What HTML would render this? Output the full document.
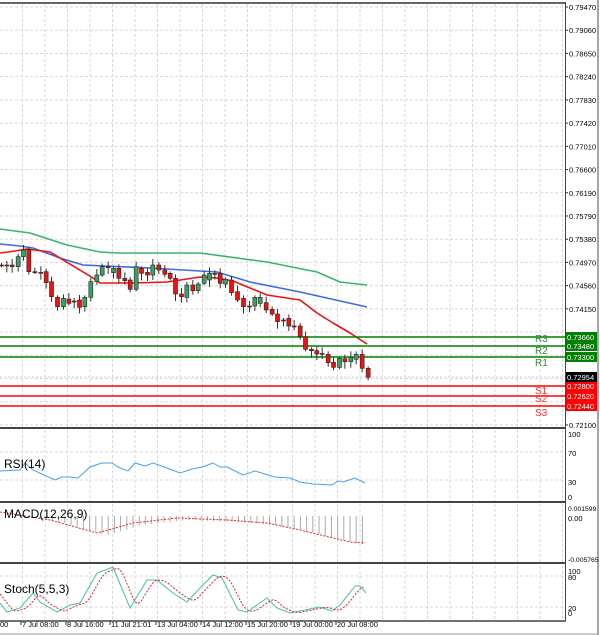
<!DOCTYPE html>
<html><head><meta charset="utf-8"><style>
html,body{margin:0;padding:0;background:#fff;width:600px;height:635px;overflow:hidden}
svg{display:block}
text{font-family:"Liberation Sans",sans-serif}
</style></head><body>
<svg id="s" width="600" height="635" xmlns="http://www.w3.org/2000/svg">
<rect width="600" height="635" fill="#fff"/>
<g id="grid" stroke="#d8d8d8" stroke-width="1" stroke-dasharray="3,2"></g>
<g id="ma" fill="none" stroke-width="1.6" stroke-linejoin="round"></g>
<g id="lv"></g>
<g id="cd"></g>
<g id="ind" fill="none"></g>
<g id="frame"></g>
<g id="lbl" font-size="7.5" fill="#000"></g>
</svg>
<script>
var NS="http://www.w3.org/2000/svg";
function el(p,t,a,txt){var e=document.createElementNS(NS,t);for(var k in a)e.setAttribute(k,a[k]);if(txt!=null)e.textContent=txt;document.getElementById(p).appendChild(e);return e;}
for(var x=22.5;x<565;x+=22.5){
 [[4,427],[430,501],[504,562],[566,620]].forEach(function(r){el('grid','line',{x1:x,x2:x,y1:r[0],y2:r[1]});});
}
var pl=["0.79470","0.79060","0.78650","0.78240","0.77830","0.77420","0.77010","0.76600","0.76190","0.75790","0.75380","0.74970","0.74560","0.74150","0.73740","0.73340","0.72920","0.72510","0.72100"];
for(var i=0;i<pl.length;i++){var y=7+i*23.22;el('grid','line',{x1:0,x2:565,y1:y,y2:y});
 if(i<14||i==18){el('lbl','line',{x1:565,x2:568,y1:y,y2:y,stroke:'#333'});el('lbl','text',{x:569,y:y+3},pl[i]);}}
[452,480].forEach(function(v){el('grid','line',{x1:0,x2:565,y1:v,y2:v});});
[576,607].forEach(function(v){el('grid','line',{x1:0,x2:565,y1:v,y2:v});});
function pth(p,pts,st,extra){var d=pts.map(function(q,i){return (i?'L':'M')+q[0]+' '+q[1];}).join(' ');var a={d:d,stroke:st};for(var k in extra)a[k]=extra[k];el(p,'path',a);}
pth('ma',[[0,229],[30,233],[67,245],[100,252],[117,253],[200,253],[267,262],[317,272],[340,282],[367,285]],'#3cb371');
pth('ma',[[0,244],[20,246],[33,248],[60,258],[83,265],[150,268],[217,272],[250,282],[300,292],[367,307]],'#4169e1');
pth('ma',[[0,253],[15,251],[27,249],[50,252],[93,278],[100,283],[133,283],[167,282],[200,277],[217,278],[233,281],[250,288],[267,295],[300,300],[317,313],[333,323],[350,333],[367,344]],'#f01010');
var C=[[0,135,136],[16,135,136],[32,135,140],[50,140,110],[66,110,90],[82,88,155],[100,155,156],[118,157,158],[134,155,188],[150,185,230],[168,232,260],[186,260,235],[202,237,250],[218,243,244],[234,240,262],[250,260,232],[268,232,185],[286,185,165],[302,165,140],[320,140,141],[336,158,145],[352,145,175],[370,175,182],[386,180,208],[404,208,140],[420,145,160],[438,157,165],[454,165,135],[472,135,150],[490,150,163],[506,160,175],[522,175,222],[540,222,230],[556,232,195],[574,195,212],[590,212,192],[608,190,165],[624,180,160],[640,160,161],[656,160,190],[672,192,178],[690,180,218],[708,215,240],[726,235,260],[744,258,259],[760,258,232],[776,250,232],[794,248,270],[812,268,282],[828,282,305],[846,300,301],[862,295,318],[878,318,319],[896,318,350],[912,350,388],[930,388,392],[946,392,402],[962,402,400],[980,403,428],[996,427,442],[1014,442,415],[1030,416,425],[1048,425,412],[1064,418,403],[1082,403,445],[1100,445,472]];
C.forEach(function(c,i){var x=c[0]/3+1.5,o=220+c[1]/3,cl=220+c[2]/3,hi=Math.min(o,cl)-2-(i*7%5),lo=Math.max(o,cl)+2+(i*5%6);
 el('cd','line',{x1:x,x2:x,y1:hi,y2:lo,stroke:'#333','stroke-width':1});
 var up=cl<o,t=Math.min(o,cl),h=Math.max(Math.abs(o-cl),1);
 el('cd','rect',{x:x-2,y:t,width:4,height:h,fill:up?'#3ca060':'#ee1111',stroke:'#222','stroke-width':0.6});});
var L=[[337,'#008000','0.73660','R3',342],[346,'#008000','0.73480','R2',354],[357,'#008000','0.73300','R1',366],[386,'#ff0000','0.72800','S1',394],[396,'#ff0000','0.72620','S2',402],[406,'#ff0000','0.72440','S3',416]];
L.forEach(function(l){el('lv','line',{x1:0,x2:565,y1:l[0],y2:l[0],stroke:l[1],'stroke-width':1.6});
 el('lv','rect',{x:566,y:l[0]-5,width:31,height:10,fill:l[1]});
 el('lv','text',{x:567,y:l[0]+3,'font-size':7.5,fill:'#fff'},l[2]);
 el('lv','text',{x:535,y:l[4],'font-size':10,fill:l[1]=='#008000'?'#2e8b2e':'#ff3030'},l[3]);});
el('lv','line',{x1:0,x2:565,y1:377,y2:377,stroke:'#ccc','stroke-dasharray':'2,2'});
el('lv','rect',{x:566,y:372,width:31,height:10,fill:'#000'});
el('lv','text',{x:567,y:380,'font-size':7.5,fill:'#fff'},'0.72954');
pth('ind',[[0,471],[20,470],[25,463],[33,470],[55,480],[62,477],[70,477],[78,478],[90,467],[102,463],[112,463],[118,467],[128,471],[135,463],[145,466],[153,463],[167,468],[180,473],[192,469],[202,467],[213,463],[220,467],[227,467],[243,475],[255,471],[275,477],[290,478],[300,482],[313,484],[332,485],[338,481],[343,482],[355,478],[365,483]],'#4a9ff0',{'stroke-width':1});
var sg=[[0,512],[50,520],[97,533],[133,523],[177,518],[227,520],[267,523],[300,530],[333,538],[350,542],[365,543]];
function interp(a,x){for(var i=1;i<a.length;i++)if(x<=a[i][0]){var p=a[i-1],q=a[i];return p[1]+(q[1]-p[1])*(x-p[0])/(q[0]-p[0]);}return a[a.length-1][1];}
for(var x=40;x<=367;x+=6.2){var b=interp(sg,x-10)+2;if(b>517)el('ind','line',{x1:x,x2:x,y1:516,y2:b,stroke:'#aaa','stroke-width':1});}
pth('ind',sg,'#ee2222',{'stroke-width':1,'stroke-dasharray':'2,1.5'});
var st=[[0,603],[7,612],[20,608],[33,593],[40,602],[57,612],[70,605],[80,603],[97,573],[113,567],[130,608],[147,580],[157,580],[173,593],[187,602],[200,588],[213,575],[222,578],[238,610],[247,612],[267,598],[277,608],[290,613],[300,611],[320,607],[332,611],[340,605],[355,586],[360,586],[366,593]];
pth('ind',st,'#40c0b0',{'stroke-width':1});
var sd=[];for(var x=0;x<=365;x+=3){var v=(interp(st,x-4)+interp(st,x-7)+interp(st,x-10))/3;sd.push([x,v.toFixed(1)]);}
pth('ind',sd,'#ee2222',{'stroke-width':1,'stroke-dasharray':'2,1.5'});
[[3,'#666',2],[428,'#444',2],[502,'#444',2],[563,'#444',2],[621,'#444',1.5]].forEach(function(f){el('frame','line',{x1:0,x2:566,y1:f[0],y2:f[0],stroke:f[1],'stroke-width':f[2]});});
el('frame','line',{x1:565.5,x2:565.5,y1:2,y2:621,stroke:'#444','stroke-width':1});
el('frame','line',{x1:598,x2:598,y1:0,y2:635,stroke:'#888','stroke-width':1.5});
el('frame','line',{x1:0,x2:598,y1:634,y2:634,stroke:'#999','stroke-width':1});
el('lbl','text',{x:4,y:468,'font-size':12,fill:'#000'},'RSI(14)');
el('lbl','text',{x:4,y:518,'font-size':12,fill:'#000'},'MACD(12,26,9)');
el('lbl','text',{x:4,y:593,'font-size':12,fill:'#000'},'Stoch(5,5,3)');
[[434,'100'],[453,'70'],[482,'30'],[497,'0'],[508,'0.001599'],[518,'0.00'],[559,'-0.005765'],[571,'100'],[577,'80'],[608,'20'],[613,'0']].forEach(function(a){el('lbl','text',{x:568,y:a[0]+3,'font-size':a[1].length>7?6.8:7.5},a[1]);});
[[0,'00'],[22,'7 Jul 08:00'],[67,'8 Jul 16:00'],[111,'11 Jul 21:01'],[157,'13 Jul 04:00'],[202,'14 Jul 12:00'],[247,'15 Jul 20:00'],[292,'19 Jul 00:00'],[337,'20 Jul 08:00']].forEach(function(a){el('lbl','text',{x:a[0],y:627},a[1]);if(a[0]>0)el('lbl','line',{x1:a[0]-1,x2:a[0]-1,y1:621,y2:625,stroke:'#333'});});
</script>
</body></html>
